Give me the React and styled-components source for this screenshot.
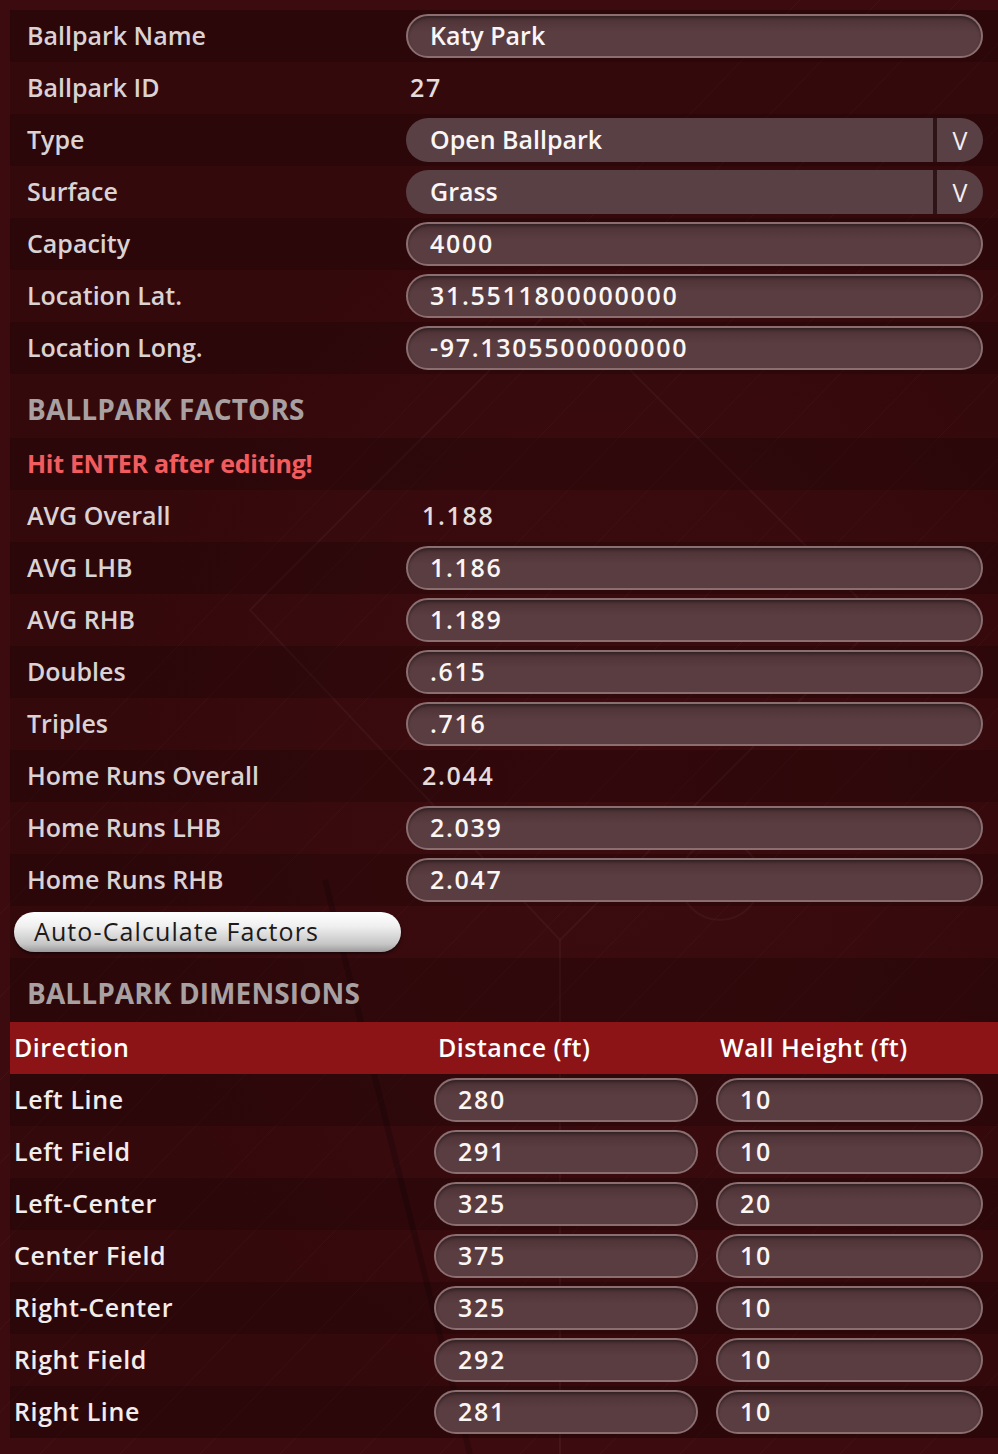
import React from "react";
import styled, { createGlobalStyle } from "styled-components";

const Global = createGlobalStyle`
  html, body { margin: 0; padding: 0; }
  body {
    background: #3c0b0f;
    font-family: "Open Sans", "Liberation Sans", sans-serif;
    -webkit-font-smoothing: antialiased;
  }
`;

const Page = styled.div`
  position: relative;
  width: 998px;
  min-height: 1454px;
  box-sizing: border-box;
  padding: 10px 0 0 10px;
  overflow: hidden;
  background:
    radial-gradient(ellipse at 60% 55%, rgba(90, 20, 25, 0.3), rgba(0, 0, 0, 0) 60%),
    #3c0b0f;
`;

const Texture = styled.svg`
  position: absolute;
  inset: 0;
  pointer-events: none;
  z-index: 0;
`;

const Panel = styled.div`
  position: relative;
  z-index: 1;
  display: flex;
  flex-direction: column;
`;

const rowBg = (p) => (p.$dark ? "rgba(10, 0, 1, 0.32)" : "rgba(10, 0, 1, 0.14)");

const Row = styled.div`
  display: grid;
  grid-template-columns: 396px 1fr;
  align-items: center;
  height: 52px;
  padding-right: 15px;
  background: ${rowBg};
`;

const textBase = `
  font-size: 25px;
  font-weight: 600;
  line-height: 30px;
  padding-bottom: 3px;
  white-space: nowrap;
`;

const Label = styled.div`
  ${textBase}
  padding-left: 17px;
  color: #dbd3d3;
`;

const Value = styled.div`
  ${textBase}
  padding-left: ${(p) => p.$indent || 4}px;
  color: #e4dcdc;
  letter-spacing: 1.7px;
`;

const Pill = styled.div`
  ${textBase}
  padding-bottom: 2px;
  height: 44px;
  box-sizing: border-box;
  border-radius: 22px;
  border: 2px solid #8a6e70;
  background: linear-gradient(#4c3134, #5a3d40 40%, #5a3d40);
  box-shadow: inset 0 2px 3px rgba(0, 0, 0, 0.35);
  display: flex;
  align-items: center;
  padding-left: 22px;
  color: #fbf6f6;
  letter-spacing: ${(p) => (p.$num ? "1.7px" : "0")};
`;

const Select = styled.div`
  ${textBase}
  padding-bottom: 0;
  height: 44px;
  border-radius: 22px;
  background: #584044;
  display: flex;
  align-items: center;
  color: #fbf6f6;
  overflow: hidden;
`;

const SelectText = styled.div`
  flex: 1;
  padding: 0 0 2px 24px;
`;

const SelectArrow = styled.div`
  width: 46px;
  align-self: stretch;
  border-left: 4px solid #2e1416;
  display: flex;
  align-items: center;
  justify-content: center;
  font-size: 25px;
  font-weight: 500;
  color: #f4eeee;
`;

const SectionTitle = styled.div`
  height: 64px;
  box-sizing: border-box;
  padding: 6px 0 0 17px;
  display: flex;
  align-items: center;
  color: #a8a0a1;
  font-size: 28px;
  font-weight: 700;
  letter-spacing: 0.1px;
  background: ${rowBg};
`;

const Warning = styled(Label)`
  color: #f25c5e;
  font-weight: 700;
  letter-spacing: -0.3px;
`;

const ButtonRow = styled.div`
  height: 52px;
  display: flex;
  align-items: center;
  padding-left: 4px;
  background: ${rowBg};
`;

const Button = styled.button`
  ${textBase}
  padding: 0 0 2px 20px;
  width: 387px;
  height: 40px;
  border: none;
  border-radius: 20px;
  text-align: left;
  font-family: inherit;
  font-weight: 500;
  letter-spacing: 1.1px;
  color: #1c1a1a;
  background: linear-gradient(#ffffff 0%, #f0f0f0 35%, #c6c6c6 80%, #9a9a9a 100%);
  box-shadow: 0 2px 3px rgba(0, 0, 0, 0.5);
`;

const TableHead = styled.div`
  display: grid;
  grid-template-columns: 424px 282px 1fr;
  align-items: center;
  height: 52px;
  background: #8c1417;
  color: #ffffff;
`;

const HeadCell = styled.div`
  ${textBase}
  letter-spacing: 0.5px;
  padding-left: 4px;
`;

const DimRow = styled.div`
  display: grid;
  grid-template-columns: 406px 264px 267px;
  column-gap: 18px;
  align-items: center;
  height: 52px;
  background: ${rowBg};
`;

const DimLabel = styled.div`
  ${textBase}
  padding-left: 4px;
  letter-spacing: 0.6px;
  color: #f2eded;
`;

const info = [
  ["Ballpark Name", "input", "Katy Park"],
  ["Ballpark ID", "static", "27"],
  ["Type", "select", "Open Ballpark"],
  ["Surface", "select", "Grass"],
  ["Capacity", "num", "4000"],
  ["Location Lat.", "num", "31.5511800000000"],
  ["Location Long.", "num", "-97.1305500000000"],
];

const factors = [
  ["AVG Overall", "static", "1.188"],
  ["AVG LHB", "num", "1.186"],
  ["AVG RHB", "num", "1.189"],
  ["Doubles", "num", ".615"],
  ["Triples", "num", ".716"],
  ["Home Runs Overall", "static", "2.044"],
  ["Home Runs LHB", "num", "2.039"],
  ["Home Runs RHB", "num", "2.047"],
];

const dims = [
  ["Left Line", "280", "10"],
  ["Left Field", "291", "10"],
  ["Left-Center", "325", "20"],
  ["Center Field", "375", "10"],
  ["Right-Center", "325", "10"],
  ["Right Field", "292", "10"],
  ["Right Line", "281", "10"],
];

function Field({ kind, value, indent }) {
  if (kind === "input") return <Pill>{value}</Pill>;
  if (kind === "num") return <Pill $num>{value}</Pill>;
  if (kind === "select")
    return (
      <Select>
        <SelectText>{value}</SelectText>
        <SelectArrow>V</SelectArrow>
      </Select>
    );
  return <Value $indent={indent}>{value}</Value>;
}

export default function App() {
  return (
    <>
      <Global />
      <Page>
        <Texture width="998" height="1454" viewBox="0 0 998 1454">
          <g stroke="rgba(255,255,255,0.035)" strokeWidth="1" fill="none">
            {Array.from({ length: 30 }).map((_, i) => (
              <line key={i} x1={-600 + i * 80} y1={1454} x2={-600 + i * 80 + 1400} y2={0} />
            ))}
          </g>
          <g stroke="rgba(255,255,255,0.045)" strokeWidth="2" fill="none">
            <path d="M250 610 L560 300 L880 620 L560 940 Z" />
            <path d="M560 940 L560 1454" />
            <circle cx="720" cy="880" r="40" />
          </g>
          <g stroke="rgba(0,0,0,0.18)" strokeWidth="6" fill="none">
            <path d="M325 880 L470 1454" />
          </g>
        </Texture>
        <Panel>
          {info.map(([l, k, v], i) => (
            <Row key={l} $dark={i % 2 === 0}>
              <Label>{l}</Label>
              <Field kind={k} value={v} indent={4} />
            </Row>
          ))}
          <SectionTitle>BALLPARK FACTORS</SectionTitle>
          <Row $dark>
            <Warning>Hit ENTER after editing!</Warning>
          </Row>
          {factors.map(([l, k, v], i) => (
            <Row key={l} $dark={i % 2 === 1}>
              <Label>{l}</Label>
              <Field kind={k} value={v} indent={16} />
            </Row>
          ))}
          <ButtonRow>
            <Button>Auto-Calculate Factors</Button>
          </ButtonRow>
          <SectionTitle $dark>BALLPARK DIMENSIONS</SectionTitle>
          <TableHead>
            <HeadCell>Direction</HeadCell>
            <HeadCell>Distance (ft)</HeadCell>
            <HeadCell>Wall Height (ft)</HeadCell>
          </TableHead>
          {dims.map(([l, d, h], i) => (
            <DimRow key={l} $dark={i % 2 === 0}>
              <DimLabel>{l}</DimLabel>
              <Pill $num>{d}</Pill>
              <Pill $num>{h}</Pill>
            </DimRow>
          ))}
        </Panel>
      </Page>
    </>
  );
}
